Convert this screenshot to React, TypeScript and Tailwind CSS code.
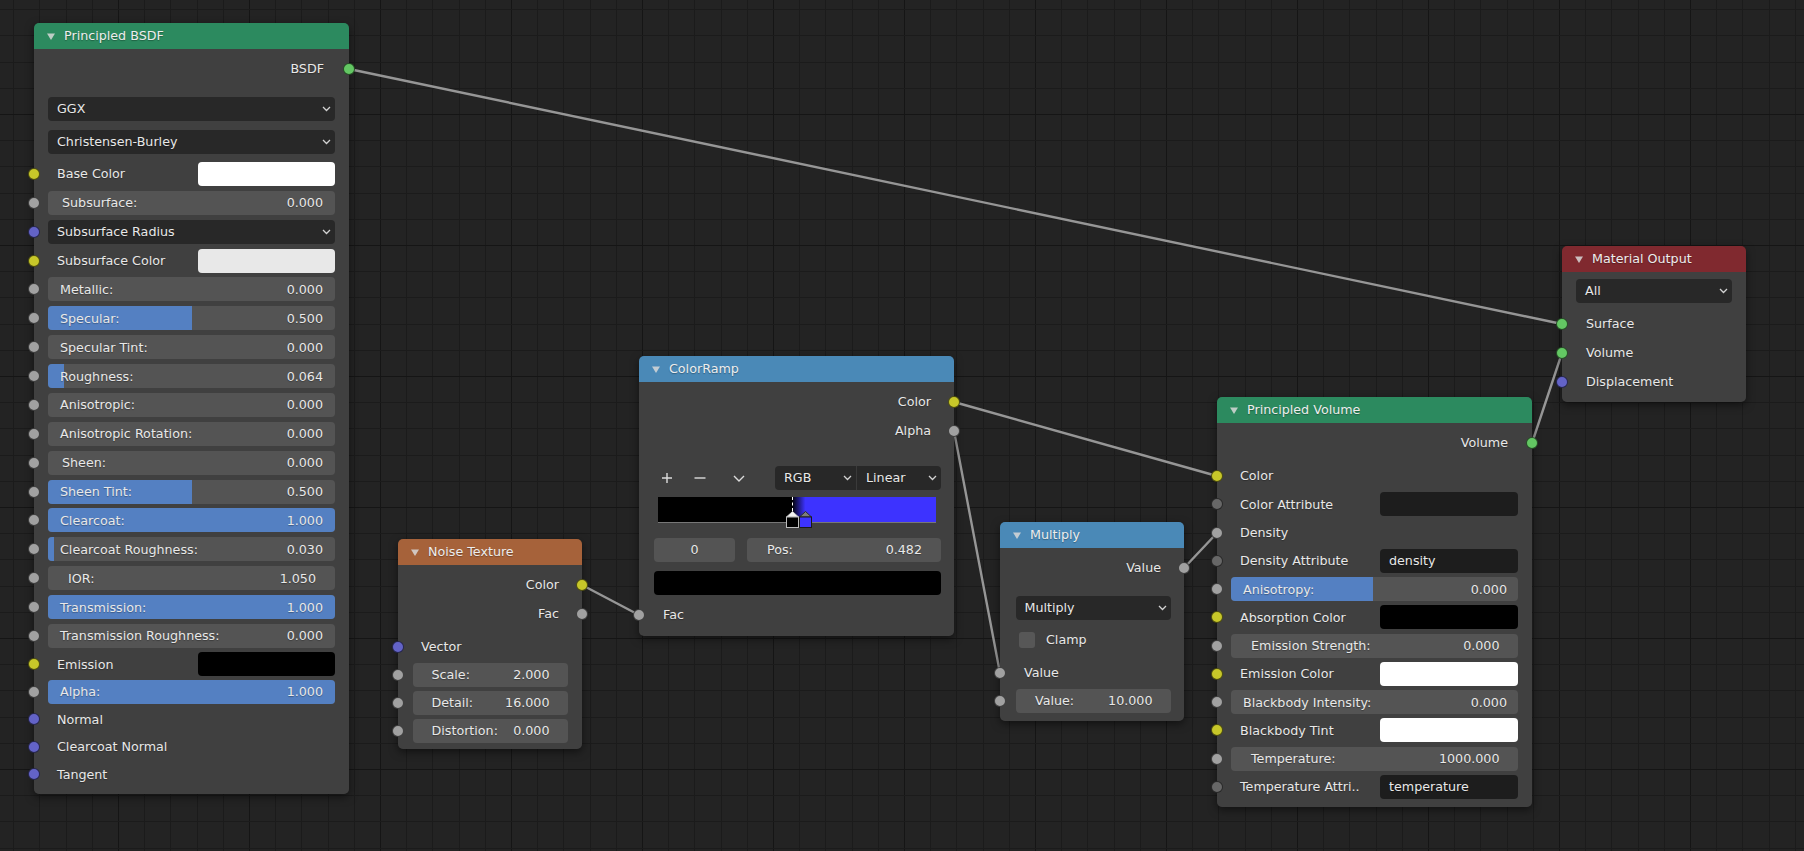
import React from "react";

// socket colours by type
const SOCK = {
  color: "bg-[#c7c729]",
  float: "bg-[#a1a1a1]",
  vector: "bg-[#6363c7]",
  shader: "bg-[#63c763]",
  string: "bg-[#676767]",
};
type Sock = keyof typeof SOCK;

function Socket({ type, side }: { type: Sock; side: "in" | "out" }) {
  return (
    <span
      className={`absolute top-1/2 -translate-y-1/2 w-[12px] h-[12px] rounded-full border border-black/60 ${SOCK[type]} ${
        side === "in" ? "-left-[6px]" : "-right-[6px]"
      }`}
    />
  );
}

function Row({
  h,
  sock,
  side = "in",
  className = "",
  children,
}: {
  h: string;
  sock?: Sock;
  side?: "in" | "out";
  className?: string;
  children?: React.ReactNode;
}) {
  return (
    <div className={`relative flex items-center ${h} ${className}`}>
      {sock && <Socket type={sock} side={side} />}
      {children}
    </div>
  );
}

function Chevron() {
  return (
    <svg width="9" height="6" viewBox="0 0 9 6" className="shrink-0">
      <path d="M1 1 L4.5 4.5 L8 1" fill="none" stroke="#d2d2d2" strokeWidth="1.3" />
    </svg>
  );
}

function Dropdown({ label, className = "" }: { label: string; className?: string }) {
  return (
    <div
      className={`h-[24px] rounded-[4px] bg-[#282828] flex items-center justify-between pl-[9px] pr-[4px] ${className}`}
    >
      <span>{label}</span>
      <Chevron />
    </div>
  );
}

function Slider({
  label,
  value,
  fill = 0,
  pad = "pl-3 pr-3",
  className = "",
}: {
  label: string;
  value: string;
  fill?: number;
  pad?: string;
  className?: string;
}) {
  return (
    <div className={`relative h-[24px] rounded-[4px] bg-[#545454] overflow-hidden ${className}`}>
      {fill > 0 && (
        <div className="absolute inset-y-0 left-0 bg-[#5480c2]" style={{ width: `${fill * 100}%` }} />
      )}
      <div className={`relative h-full flex items-center justify-between ${pad}`}>
        <span>{label}</span>
        <span>{value}</span>
      </div>
    </div>
  );
}

function Swatch({ color, className = "" }: { color: string; className?: string }) {
  return <div className={`h-[24px] rounded-[4px] ${color} ${className}`} />;
}

function TextField({ text = "", className = "" }: { text?: string; className?: string }) {
  return (
    <div className={`h-[24px] rounded-[4px] bg-[#1d1d1d] flex items-center pl-[9px] ${className}`}>
      {text}
    </div>
  );
}

function Node({
  className,
  head,
  title,
  children,
}: {
  className: string;
  head: string;
  title: string;
  children: React.ReactNode;
}) {
  return (
    <div className={`absolute rounded-[5px] shadow-[0_3px_9px_rgba(0,0,0,0.5)] ${className}`}>
      <div className={`h-[26px] rounded-t-[5px] flex items-center ${head}`}>
        <svg width="8" height="7" viewBox="0 0 8 7" className="ml-[13px] shrink-0">
          <path d="M0 0.5 H8 L4 7 Z" fill="#d8d8d8" fillOpacity="0.85" />
        </svg>
        <span className="ml-[9px] text-[#ededed]">{title}</span>
      </div>
      <div className="rounded-b-[5px] bg-[#424242]/95">{children}</div>
    </div>
  );
}

const B = "h-[28.875px]";
const B2 = "h-[27.5px]";
const V = "h-[28.27px]";

function PrincipledBSDF() {
  return (
    <Node className="left-[34px] top-[23px] w-[315px]" head="bg-[#2c8a5f]" title="Principled BSDF">
      <div className="pt-[8px] pb-[6px]">
        <Row h="h-[24px]" sock="shader" side="out">
          <span className="ml-auto pr-[25px]">BSDF</span>
        </Row>
        <div className="mt-[16px] mx-[14px]">
          <Dropdown label="GGX" />
        </div>
        <div className="mt-[9px] mx-[14px]">
          <Dropdown label="Christensen-Burley" />
        </div>
        <div className="mt-[5.5px]">
          <Row h={B} sock="color">
            <span className="pl-[23px]">Base Color</span>
            <Swatch color="bg-white" className="ml-auto mr-[14px] w-[137px]" />
          </Row>
          <Row h={B} sock="float">
            <Slider label="Subsurface:" value="0.000" pad="pl-[14px] pr-3" className="flex-1 mx-[14px]" />
          </Row>
          <Row h={B} sock="vector">
            <Dropdown label="Subsurface Radius" className="flex-1 mx-[14px]" />
          </Row>
          <Row h={B} sock="color">
            <span className="pl-[23px]">Subsurface Color</span>
            <Swatch color="bg-[#e8e8e8]" className="ml-auto mr-[14px] w-[137px]" />
          </Row>
          <Row h={B} sock="float">
            <Slider label="Metallic:" value="0.000" className="flex-1 mx-[14px]" />
          </Row>
          <Row h={B} sock="float">
            <Slider label="Specular:" value="0.500" fill={0.5} className="flex-1 mx-[14px]" />
          </Row>
          <Row h={B} sock="float">
            <Slider label="Specular Tint:" value="0.000" className="flex-1 mx-[14px]" />
          </Row>
          <Row h={B} sock="float">
            <Slider label="Roughness:" value="0.064" fill={0.055} className="flex-1 mx-[14px]" />
          </Row>
          <Row h={B} sock="float">
            <Slider label="Anisotropic:" value="0.000" className="flex-1 mx-[14px]" />
          </Row>
          <Row h={B} sock="float">
            <Slider label="Anisotropic Rotation:" value="0.000" className="flex-1 mx-[14px]" />
          </Row>
          <Row h={B} sock="float">
            <Slider label="Sheen:" value="0.000" pad="pl-[14px] pr-3" className="flex-1 mx-[14px]" />
          </Row>
          <Row h={B} sock="float">
            <Slider label="Sheen Tint:" value="0.500" fill={0.5} className="flex-1 mx-[14px]" />
          </Row>
          <Row h={B} sock="float">
            <Slider label="Clearcoat:" value="1.000" fill={1} className="flex-1 mx-[14px]" />
          </Row>
          <Row h={B} sock="float">
            <Slider label="Clearcoat Roughness:" value="0.030" fill={0.02} className="flex-1 mx-[14px]" />
          </Row>
          <Row h={B} sock="float">
            <Slider label="IOR:" value="1.050" pad="pl-[20px] pr-[19px]" className="flex-1 mx-[14px]" />
          </Row>
          <Row h={B} sock="float">
            <Slider label="Transmission:" value="1.000" fill={1} className="flex-1 mx-[14px]" />
          </Row>
          <Row h={B} sock="float">
            <Slider label="Transmission Roughness:" value="0.000" className="flex-1 mx-[14px]" />
          </Row>
          <Row h={B2} sock="color">
            <span className="pl-[23px]">Emission</span>
            <Swatch color="bg-black" className="ml-auto mr-[14px] w-[137px]" />
          </Row>
          <Row h={B2} sock="float">
            <Slider label="Alpha:" value="1.000" fill={1} className="flex-1 mx-[14px]" />
          </Row>
          <Row h={B2} sock="vector">
            <span className="pl-[23px]">Normal</span>
          </Row>
          <Row h={B2} sock="vector">
            <span className="pl-[23px]">Clearcoat Normal</span>
          </Row>
          <Row h={B2} sock="vector">
            <span className="pl-[23px]">Tangent</span>
          </Row>
        </div>
      </div>
    </Node>
  );
}

function NoiseTexture() {
  return (
    <Node className="left-[398px] top-[539px] w-[184px]" head="bg-[#a6623a]" title="Noise Texture">
      <div className="pt-[5.5px] pb-[5px]">
        <Row h="h-[29px]" sock="color" side="out">
          <span className="ml-auto pr-[23px]">Color</span>
        </Row>
        <Row h="h-[29px]" sock="float" side="out">
          <span className="ml-auto pr-[23px]">Fac</span>
        </Row>
        <Row h="h-[28px]" sock="vector" className="mt-[4.5px]">
          <span className="pl-[23px]">Vector</span>
        </Row>
        <Row h="h-[28px]" sock="float">
          <Slider label="Scale:" value="2.000" pad="pl-[19px] pr-[18px]" className="flex-1 mx-[14.5px]" />
        </Row>
        <Row h="h-[28px]" sock="float">
          <Slider label="Detail:" value="16.000" pad="pl-[19px] pr-[18px]" className="flex-1 mx-[14.5px]" />
        </Row>
        <Row h="h-[27px]" sock="float">
          <Slider label="Distortion:" value="0.000" pad="pl-[19px] pr-[18px]" className="flex-1 mx-[14.5px]" />
        </Row>
      </div>
    </Node>
  );
}

function Marker({ active, className }: { active: boolean; className: string }) {
  return (
    <svg width="13" height="17" viewBox="0 0 13 17" className={`absolute ${className}`}>
      <path
        d="M0.5 6 L6.5 0.5 L12.5 6 Z"
        fill={active ? "#f2f2f2" : "#7c7c7c"}
        stroke={active ? "#cfcfcf" : "#2a2a2a"}
        strokeWidth="1"
      />
      <rect
        x="0.5"
        y="6"
        width="12"
        height="10.5"
        fill={active ? "#000000" : "#3d33ff"}
        stroke={active ? "#bdbdbd" : "#1a1a1a"}
        strokeWidth="1"
      />
    </svg>
  );
}

function ColorRamp() {
  return (
    <Node className="left-[639px] top-[356px] w-[315px]" head="bg-[#4a89b7]" title="ColorRamp">
      <div className="pt-[5.5px] pb-[7px]">
        <Row h="h-[29px]" sock="color" side="out">
          <span className="ml-auto pr-[23px]">Color</span>
        </Row>
        <Row h="h-[29px]" sock="float" side="out">
          <span className="ml-auto pr-[23px]">Alpha</span>
        </Row>
        <div className="mt-[20.5px] h-[24px] flex items-center">
          <svg width="12" height="12" viewBox="0 0 12 12" className="ml-[21.5px]">
            <path d="M6 1 V11 M1 6 H11" stroke="#dcdcdc" strokeWidth="1.4" />
          </svg>
          <svg width="12" height="12" viewBox="0 0 12 12" className="ml-[21.5px]">
            <path d="M0.5 6 H11.5" stroke="#dcdcdc" strokeWidth="1.4" />
          </svg>
          <svg width="12" height="7" viewBox="0 0 12 7" className="ml-[27px]">
            <path d="M1 1 L6 6 L11 1" fill="none" stroke="#dcdcdc" strokeWidth="1.4" />
          </svg>
          <div className="ml-[30px] flex h-[24px]">
            <div className="w-[82px] rounded-l-[4px] bg-[#282828] flex items-center justify-between pl-[9px] pr-[4px] border-r border-[#3a3a3a]">
              <span>RGB</span>
              <Chevron />
            </div>
            <div className="w-[84px] rounded-r-[4px] bg-[#282828] flex items-center justify-between pl-[9px] pr-[4px]">
              <span>Linear</span>
              <Chevron />
            </div>
          </div>
        </div>
        <div className="relative mt-[7px] ml-[19px] w-[278px] h-[26px]">
          <div className="h-full bg-[linear-gradient(to_right,#000_48.2%,#3d33ff_53%)] border-b-[1.5px] border-[#777777]" />
          <div className="absolute left-[134px] top-0 h-[14px] border-l border-dashed border-white" />
          <Marker active className="left-[127.5px] top-[14px]" />
          <Marker active={false} className="left-[140.5px] top-[14px]" />
        </div>
        <div className="mt-[15px] flex h-[24px] ml-[15px]">
          <div className="w-[81px] rounded-[4px] bg-[#545454] flex items-center justify-center">0</div>
          <div className="ml-[12px] w-[194px] rounded-[4px] bg-[#545454] flex items-center justify-between pl-[20px] pr-[19px]">
            <span>Pos:</span>
            <span>0.482</span>
          </div>
        </div>
        <div className="mt-[9px] ml-[15px] w-[287px] h-[24px] rounded-[4px] bg-black" />
        <Row h="h-[28px]" sock="float" className="mt-[6px]">
          <span className="pl-[24px]">Fac</span>
        </Row>
      </div>
    </Node>
  );
}

function Multiply() {
  return (
    <Node className="left-[1000px] top-[522px] w-[184px]" head="bg-[#4a89b7]" title="Multiply">
      <div className="pt-[5.5px] pb-[8px]">
        <Row h="h-[29px]" sock="float" side="out">
          <span className="ml-auto pr-[23px]">Value</span>
        </Row>
        <Dropdown label="Multiply" className="mt-[13.5px] ml-[15.5px] mr-[13.5px]" />
        <Row h="h-[28px]" className="mt-[6px]">
          <div className="ml-[18.5px] w-[16px] h-[16px] rounded-[3px] bg-[#575757]" />
          <span className="ml-[11.5px]">Clamp</span>
        </Row>
        <Row h="h-[28px]" sock="float" className="mt-[5px]">
          <span className="pl-[24px]">Value</span>
        </Row>
        <Row h="h-[24px]" sock="float" className="mt-[2px]">
          <Slider
            label="Value:"
            value="10.000"
            pad="pl-[19.5px] pr-[18px]"
            className="flex-1 ml-[15.5px] mr-[13.5px]"
          />
        </Row>
      </div>
    </Node>
  );
}

function PrincipledVolume() {
  return (
    <Node className="left-[1217px] top-[397px] w-[315px]" head="bg-[#2c8a5f]" title="Principled Volume">
      <div className="pt-[8px] pb-[6px]">
        <Row h="h-[24px]" sock="shader" side="out">
          <span className="ml-auto pr-[24px]">Volume</span>
        </Row>
        <div className="mt-[6.85px]">
          <Row h={V} sock="color">
            <span className="pl-[23px]">Color</span>
          </Row>
          <Row h={V} sock="string">
            <span className="pl-[23px]">Color Attribute</span>
            <TextField className="ml-auto mr-[14.5px] w-[137.5px]" />
          </Row>
          <Row h={V} sock="float">
            <span className="pl-[23px]">Density</span>
          </Row>
          <Row h={V} sock="string">
            <span className="pl-[23px]">Density Attribute</span>
            <TextField text="density" className="ml-auto mr-[14.5px] w-[137.5px]" />
          </Row>
          <Row h={V} sock="float">
            <Slider
              label="Anisotropy:"
              value="0.000"
              fill={0.494}
              pad="pl-[12px] pr-[10.5px]"
              className="flex-1 ml-[14px] mr-[14.5px]"
            />
          </Row>
          <Row h={V} sock="color">
            <span className="pl-[23px]">Absorption Color</span>
            <Swatch color="bg-black" className="ml-auto mr-[14.5px] w-[137.5px]" />
          </Row>
          <Row h={V} sock="float">
            <Slider
              label="Emission Strength:"
              value="0.000"
              pad="pl-[20px] pr-[18px]"
              className="flex-1 ml-[14px] mr-[14.5px]"
            />
          </Row>
          <Row h={V} sock="color">
            <span className="pl-[23px]">Emission Color</span>
            <Swatch color="bg-white" className="ml-auto mr-[14.5px] w-[137.5px]" />
          </Row>
          <Row h={V} sock="float">
            <Slider
              label="Blackbody Intensity:"
              value="0.000"
              pad="pl-[12px] pr-[10.5px]"
              className="flex-1 ml-[14px] mr-[14.5px]"
            />
          </Row>
          <Row h={V} sock="color">
            <span className="pl-[23px]">Blackbody Tint</span>
            <Swatch color="bg-white" className="ml-auto mr-[14.5px] w-[137.5px]" />
          </Row>
          <Row h={V} sock="float">
            <Slider
              label="Temperature:"
              value="1000.000"
              pad="pl-[20px] pr-[18px]"
              className="flex-1 ml-[14px] mr-[14.5px]"
            />
          </Row>
          <Row h={V} sock="string">
            <span className="pl-[23px]">Temperature Attri..</span>
            <TextField text="temperature" className="ml-auto mr-[14.5px] w-[137.5px]" />
          </Row>
        </div>
      </div>
    </Node>
  );
}

function MaterialOutput() {
  return (
    <Node className="left-[1562px] top-[246px] w-[184px]" head="bg-[#80292f]" title="Material Output">
      <div className="pt-[7px] pb-[5.5px]">
        <Dropdown label="All" className="mx-[14px]" />
        <div className="mt-[6.5px]">
          <Row h="h-[29px]" sock="shader">
            <span className="pl-[24px]">Surface</span>
          </Row>
          <Row h="h-[29px]" sock="shader">
            <span className="pl-[24px]">Volume</span>
          </Row>
          <Row h="h-[29px]" sock="vector">
            <span className="pl-[24px]">Displacement</span>
          </Row>
        </div>
      </div>
    </Node>
  );
}

function Grid() {
  const xs = Array.from({ length: 70 }, (_, i) => i - 14);
  const ys = Array.from({ length: 33 }, (_, i) => i - 4);
  return (
    <svg className="absolute inset-0" width="1804" height="851">
      {xs.map((k) => (
        <rect
          key={`v${k}`}
          x={Math.round(380 + k * 26.2)}
          y={0}
          width={1}
          height={851}
          fill={k % 5 === 0 ? "#151515" : "#1b1b1b"}
        />
      ))}
      {ys.map((k) => (
        <rect
          key={`h${k}`}
          x={0}
          y={Math.round(114 + k * 26.2)}
          width={1804}
          height={1}
          fill={k % 5 === 0 ? "#151515" : "#1b1b1b"}
        />
      ))}
    </svg>
  );
}

const links: [number, number, number, number][] = [
  [349, 69, 1562, 324],
  [954, 402, 1217, 476],
  [954, 431, 1000, 673],
  [582, 585, 639, 615],
  [1184, 568, 1217, 533],
  [1532, 443, 1562, 353],
];

function Links() {
  return (
    <svg className="absolute inset-0" width="1804" height="851">
      {links.map(([x1, y1, x2, y2], i) => (
        <line key={i} x1={x1} y1={y1} x2={x2} y2={y2} stroke="#969696" strokeWidth="2.4" strokeLinecap="round" />
      ))}
    </svg>
  );
}

export default function App() {
  return (
    <div className="relative w-[1804px] h-[851px] overflow-hidden bg-[#232323] font-['DejaVu_Sans',sans-serif] text-[12.7px] text-[#e8e8e8] [text-shadow:0_1px_1px_rgba(0,0,0,0.3)] select-none">
      <Grid />
      <Links />
      <PrincipledBSDF />
      <NoiseTexture />
      <ColorRamp />
      <Multiply />
      <PrincipledVolume />
      <MaterialOutput />
    </div>
  );
}
